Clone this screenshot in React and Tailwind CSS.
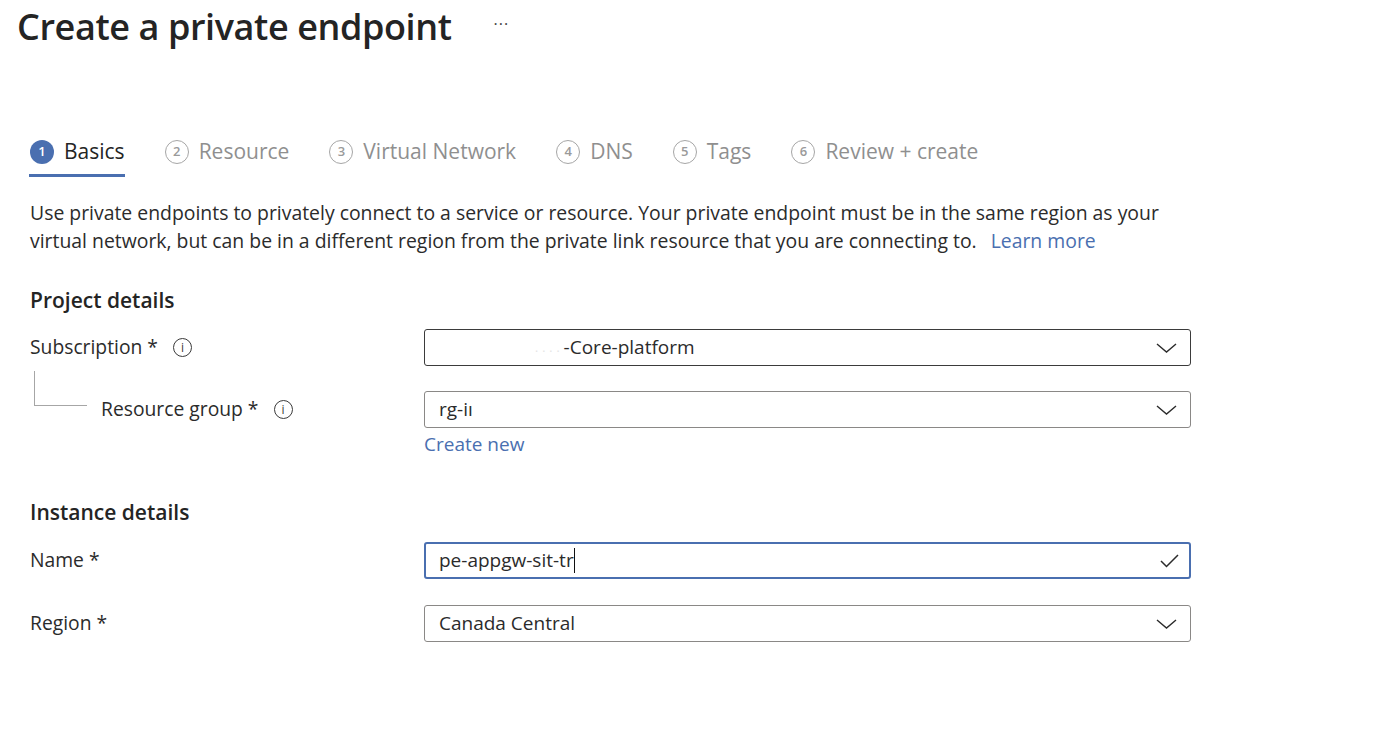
import React from 'react';

const FONT = { fontFamily: '"Open Sans", "Noto Sans", sans-serif' };

const tabs = [
  { n: 1, label: 'Basics', active: true },
  { n: 2, label: 'Resource' },
  { n: 3, label: 'Virtual Network' },
  { n: 4, label: 'DNS' },
  { n: 5, label: 'Tags' },
  { n: 6, label: 'Review + create' },
];

const Chevron = () => (
  <svg width="21" height="10" viewBox="0 0 21 10" fill="none" className="shrink-0">
    <path d="M1 1 L10.5 9 L20 1" stroke="#2b2b2b" strokeWidth="1.4" />
  </svg>
);

const Check = () => (
  <svg width="19" height="14" viewBox="0 0 19 14" fill="none" className="shrink-0">
    <path d="M1 7 L6.5 12.5 L18 1" stroke="#2b2b2b" strokeWidth="1.5" />
  </svg>
);

const Info = () => (
  <span className="w-[19px] h-[19px] rounded-full border border-[#3a3a3a] flex items-center justify-center text-[12px] leading-none text-[#3a3a3a]">
    i
  </span>
);

const Select = ({ children, dark }) => (
  <div
    className={`h-[37px] flex items-center justify-between pl-[14px] pr-[13px] rounded-[3px] border ${
      dark ? 'border-[#3b3b3b]' : 'border-[#8a8886]'
    }`}
  >
    <div className="flex items-center text-[19px] text-[#2b2b2b] whitespace-nowrap">{children}</div>
    <Chevron />
  </div>
);

const App = () => {
  return (
    <div className="w-[1400px] h-[731px] bg-white overflow-hidden text-[#2b2b2b]" style={FONT}>
      {/* HEADER */}
      <div className="flex items-center pl-[17px] pt-[5px]">
        <h1 className="text-[36px] leading-[44px] font-semibold tracking-[-0.4px] text-[#242424]">
          Create a private endpoint
        </h1>
        <span className="ml-[42px] text-[16px] tracking-[1px] text-[#444] -mt-[6px]">···</span>
      </div>

      <div className="pl-[30px]">
        {/* TABS */}
        <div className="flex items-start gap-[40px] mt-[87px]">
          {tabs.map((t) => (
            <div
              key={t.n}
              className={`flex flex-col pb-[6px] border-b-[3px] ${
                t.active ? 'border-[#4a6fb0] -ml-[1px] pl-[1px]' : 'border-transparent'
              }`}
            >
              <div className="h-[32px] flex items-center gap-[10px]">
                <span
                  className={`w-[24px] h-[24px] rounded-full flex items-center justify-center text-[13px] font-semibold ${
                    t.active
                      ? 'bg-[#4a6fb0] text-white'
                      : 'border-[1.5px] border-[#a6a6a6] text-[#9a9a9a]'
                  }`}
                >
                  {t.n}
                </span>
                <span className={`text-[21px] ${t.active ? 'text-[#242424]' : 'text-[#8f8f8f]'}`}>
                  {t.label}
                </span>
              </div>
            </div>
          ))}
        </div>

        {/* DESCRIPTION */}
        <div className="mt-[22px] text-[19.4px] leading-[28px]">
          <div>
            Use private endpoints to privately connect to a service or resource. Your private endpoint must be in the same region as your
          </div>
          <div className="flex gap-[14px]">
            <span>
              virtual network, but can be in a different region from the private link resource that you are connecting to.
            </span>
            <span className="text-[#4a6fb0]">Learn more</span>
          </div>
        </div>

        {/* PROJECT DETAILS */}
        <h2 className="mt-[31px] text-[21px] leading-[28px] font-semibold text-[#242424]">Project details</h2>

        <div className="mt-[15px] flex items-center">
          <div className="w-[394px] flex items-center gap-[15px] text-[19.3px]">
            <span>Subscription *</span>
            <Info />
          </div>
          <div className="w-[767px]">
            <Select dark>
              <span className="pl-[96px] text-[#e4e4e4] tracking-[4px] text-[12px]">....</span>
              <span>-Core-platform</span>
            </Select>
          </div>
        </div>

        <div className="mt-[25px] flex items-start">
          <div className="w-[394px] h-[37px] relative flex items-center">
            <div className="absolute left-[4px] -top-[20px] w-[53px] h-[35px] border-l border-b border-[#a6a6a6]" />
            <div className="ml-[71px] flex items-center gap-[15px] text-[19.3px]">
              <span>Resource group *</span>
              <Info />
            </div>
          </div>
          <div className="w-[767px] flex flex-col">
            <Select>
              <span>rg-iı</span>
            </Select>
            <span className="mt-[2px] text-[19px] leading-[28px] text-[#4a6fb0]">Create new</span>
          </div>
        </div>

        {/* INSTANCE DETAILS */}
        <h2 className="mt-[40px] text-[21px] leading-[28px] font-semibold text-[#242424]">Instance details</h2>

        <div className="mt-[16px] flex items-center">
          <div className="w-[394px] text-[19.3px]">Name *</div>
          <div className="w-[767px] h-[37px] flex items-center justify-between pl-[13px] pr-[10px] rounded-[3px] border-2 border-[#4a6fb0]">
            <div className="flex items-center text-[19px] whitespace-nowrap">
              <span>pe-appgw-sit-tr</span>
              <span className="w-[1.5px] h-[25px] bg-[#111]" />
            </div>
            <Check />
          </div>
        </div>

        <div className="mt-[26px] flex items-center">
          <div className="w-[394px] text-[19.3px]">Region *</div>
          <div className="w-[767px]">
            <Select>
              <span>Canada Central</span>
            </Select>
          </div>
        </div>
      </div>
    </div>
  );
};

export default App;
